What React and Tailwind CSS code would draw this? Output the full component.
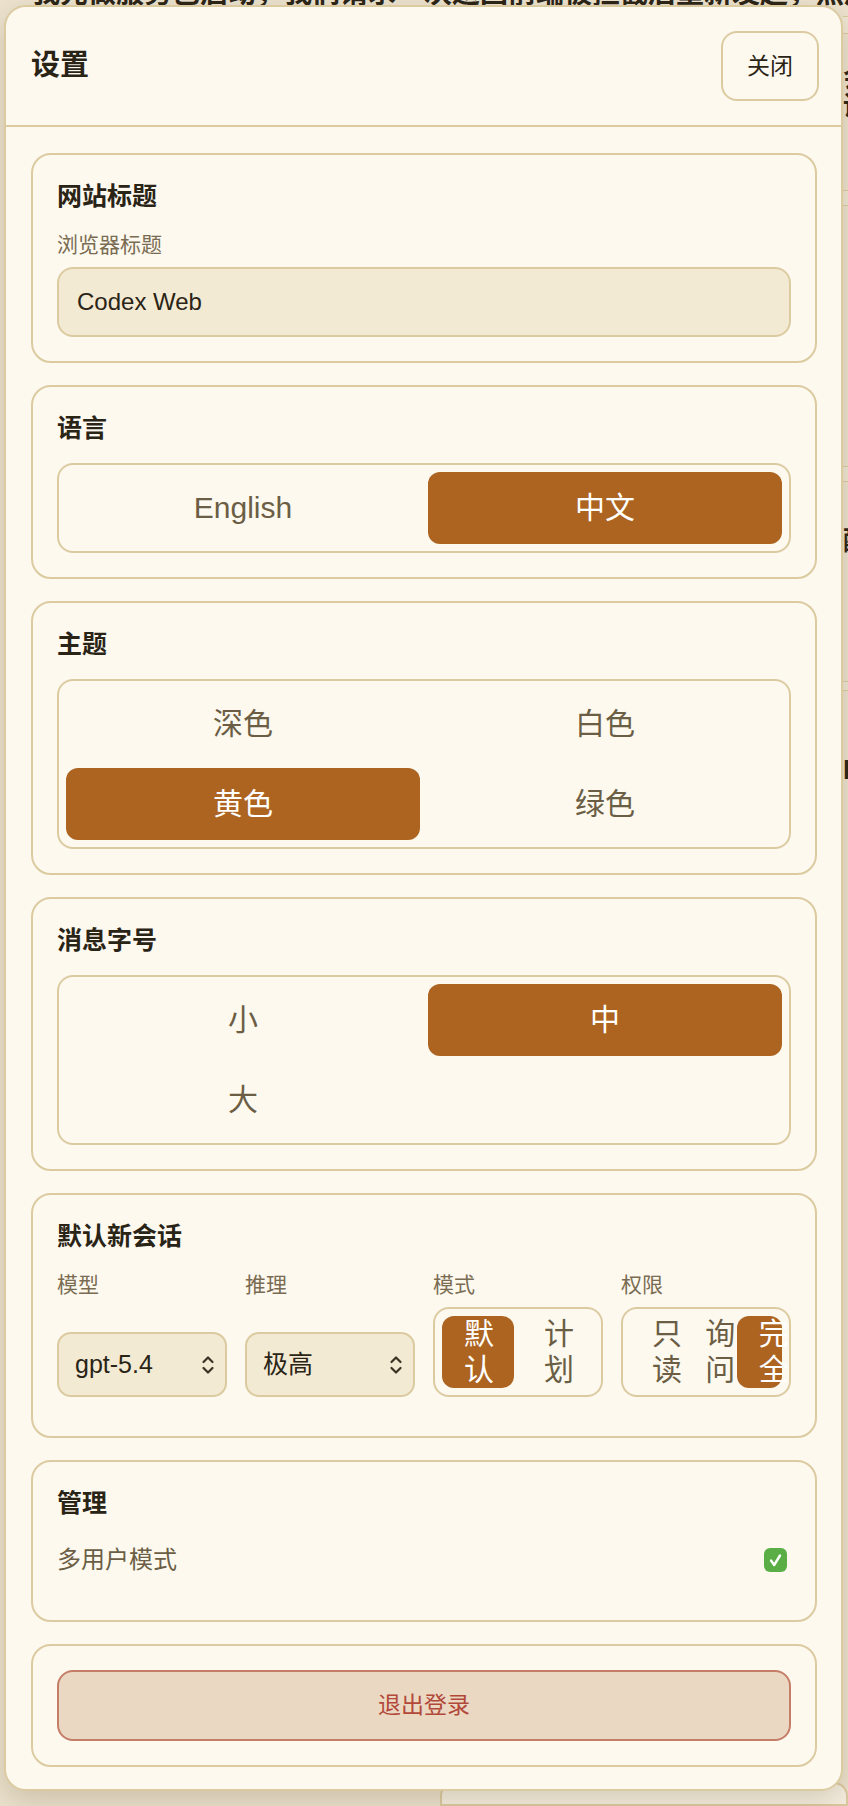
import React, { useState } from 'react';

// Settings dialog shown over the chat page
const FONT = "font-['Liberation_Sans','Noto_Sans_CJK_SC',sans-serif]";

const Section = ({ title, children, className = '' }) => (
  <div className={`rounded-[20px] border-2 border-[#dccba1] p-6 ${className}`}>
    {title && (
      <div className="mb-[18px] text-[25px] font-bold leading-[34px] text-[#2a2417]">{title}</div>
    )}
    {children}
  </div>
);

const Segmented = ({ options, value, onChange, cols = 2, className = '' }) => {
  const gridCols = cols === 3 ? 'grid-cols-3' : 'grid-cols-2';
  return (
    <div className={`overflow-hidden rounded-[16px] border-2 border-[#dccba1] p-[7px] ${className}`}>
      <div className={`grid ${gridCols} gap-2`}>
        {options.map(opt => {
          const active = opt === value;
          return (
            <button
              key={opt}
              onClick={() => onChange(opt)}
              className={`flex min-h-[72px] items-center rounded-[12px] px-[22px] text-[30px] leading-[36px] ${
                active ? 'bg-[#ac6420] text-white' : 'text-[#6b5e45]'
              }`}
            >
              <span className="w-full text-center">{opt}</span>
            </button>
          );
        })}
      </div>
    </div>
  );
};

const UpDown = () => (
  <svg width="14" height="22" viewBox="0 0 14 22" fill="none" stroke="#3a3222" strokeWidth="2.2" strokeLinecap="round" strokeLinejoin="round">
    <path d="M2.5 8 L7 3.5 L11.5 8" />
    <path d="M2.5 14 L7 18.5 L11.5 14" />
  </svg>
);

const SelectBox = ({ value }) => (
  <div className="mt-auto flex h-[65px] items-center justify-between rounded-[14px] border-2 border-[#dccba1] bg-[#f3ead3] pl-[16px] pr-[10px] text-[25px] text-[#2a2417]">
    <span>{value}</span>
    <UpDown />
  </div>
);

const Background = () => (
  <div className="flex h-full flex-col">
    <div className="-mt-[22px] pl-[32px] text-[28px] font-bold leading-[32px] whitespace-nowrap text-[#2a2417]">
      我先做服务已启动，我们请求一次返回前端被拦截后重新发起，然后获取到结果
    </div>
    <div className="mt-[6px] ml-[843px] flex flex-col">
      <div className="h-[18px] border-y border-[#dccba1] bg-[#efe7d4]" />
      <div className="h-[30px]" />
      <div className="text-[26px] font-bold leading-[28px] text-[#2a2417]">会话</div>
      <div className="h-[70px]" />
      <div className="h-[16px] border-y border-[#dccba1] bg-[#efe7d4]" />
      <div className="h-[260px]" />
      <div className="h-[16px] border-y border-[#dccba1] bg-[#efe7d4]" />
      <div className="mt-[40px] text-[26px] font-bold text-[#2a2417]">配</div>
      <div className="h-[120px]" />
      <div className="h-[10px] border-y border-[#dccba1] bg-[#efe7d4]" />
      <div className="mt-[60px] text-[26px] font-bold text-[#2a2417]">l</div>
    </div>
    <div className="mt-auto ml-[440px] h-[24px] rounded-t-[14px] border-2 border-[#dccba1] bg-[#f6f0e2]" />
  </div>
);

export default function App() {
  const [lang, setLang] = useState('中文');
  const [theme, setTheme] = useState('黄色');
  const [size, setSize] = useState('中');
  const [mode, setMode] = useState('默认');
  const [perm, setPerm] = useState('完全');
  const [multi, setMulti] = useState(true);

  return (
    <div className={`relative h-[1806px] w-[848px] overflow-hidden bg-[#ece3cf] ${FONT}`}>
      <Background />

      <div className="absolute left-[4px] top-[5px] w-[839px] rounded-[22px] border-2 border-[#dccba1] bg-[#fdf9ef] shadow-[0_10px_30px_rgba(90,70,30,0.22)]">
        {/* Header */}
        <div className="flex h-[120px] items-center justify-between border-b-2 border-[#dccba1] pl-[25px] pr-[22px]">
          <div className="text-[29px] font-bold text-[#2a2417]">设置</div>
          <button className="h-[70px] w-[98px] rounded-[16px] border-2 border-[#dccba1] text-[23px] text-[#2a2417]">
            关闭
          </button>
        </div>

        {/* Body */}
        <div className="flex flex-col gap-[22px] pt-[26px] pb-[22px] pl-[25px] pr-[24px]">
          <Section title="网站标题">
            <div className="mb-[8px] text-[21px] leading-[28px] text-[#7a6c52]">浏览器标题</div>
            <input
              defaultValue="Codex Web"
              className="h-[70px] w-full rounded-[16px] border-2 border-[#dccba1] bg-[#f3ead3] px-[18px] text-[24px] text-[#2a2417] outline-none"
            />
          </Section>

          <Section title="语言">
            <Segmented options={['English', '中文']} value={lang} onChange={setLang} />
          </Section>

          <Section title="主题">
            <Segmented options={['深色', '白色', '黄色', '绿色']} value={theme} onChange={setTheme} />
          </Section>

          <Section title="消息字号">
            <Segmented options={['小', '中', '大']} value={size} onChange={setSize} />
          </Section>

          <Section title="默认新会话">
            <div className="mb-[15px] grid grid-cols-4 gap-[18px]">
              <div className="flex flex-col">
                <div className="mb-2 text-[21px] leading-[28px] text-[#7a6c52]">模型</div>
                <SelectBox value="gpt-5.4" />
              </div>
              <div className="flex flex-col">
                <div className="mb-2 text-[21px] leading-[28px] text-[#7a6c52]">推理</div>
                <SelectBox value="极高" />
              </div>
              <div className="flex flex-col">
                <div className="mb-2 text-[21px] leading-[28px] text-[#7a6c52]">模式</div>
                <Segmented options={['默认', '计划']} value={mode} onChange={setMode} />
              </div>
              <div className="flex flex-col">
                <div className="mb-2 text-[21px] leading-[28px] text-[#7a6c52]">权限</div>
                <Segmented options={['只读', '询问', '完全']} value={perm} onChange={setPerm} cols={3} />
              </div>
            </div>
          </Section>

          <Section title="管理">
            <div className="mb-[14px] flex h-[44px] items-center justify-between pr-[4px]">
              <span className="text-[24px] text-[#6b5e45]">多用户模式</span>
              <button
                onClick={() => setMulti(!multi)}
                className={`flex h-[24px] w-[23px] items-center justify-center rounded-[6px] ${
                  multi ? 'bg-[#5aae45]' : 'border-2 border-[#dccba1] bg-white'
                }`}
                aria-label="多用户模式"
              >
                {multi && (
                  <svg width="15" height="15" viewBox="0 0 15 15" fill="none" stroke="white" strokeWidth="2.4" strokeLinecap="round" strokeLinejoin="round">
                    <path d="M3 7.5 L6.2 12 L12 2.5" />
                  </svg>
                )}
              </button>
            </div>
          </Section>

          <Section>
            <button className="h-[71px] w-full rounded-[16px] border-2 border-[#c47e68] bg-[#ebd8c2] text-[23px] text-[#b2483a]">
              退出登录
            </button>
          </Section>
        </div>
      </div>
    </div>
  );
}
